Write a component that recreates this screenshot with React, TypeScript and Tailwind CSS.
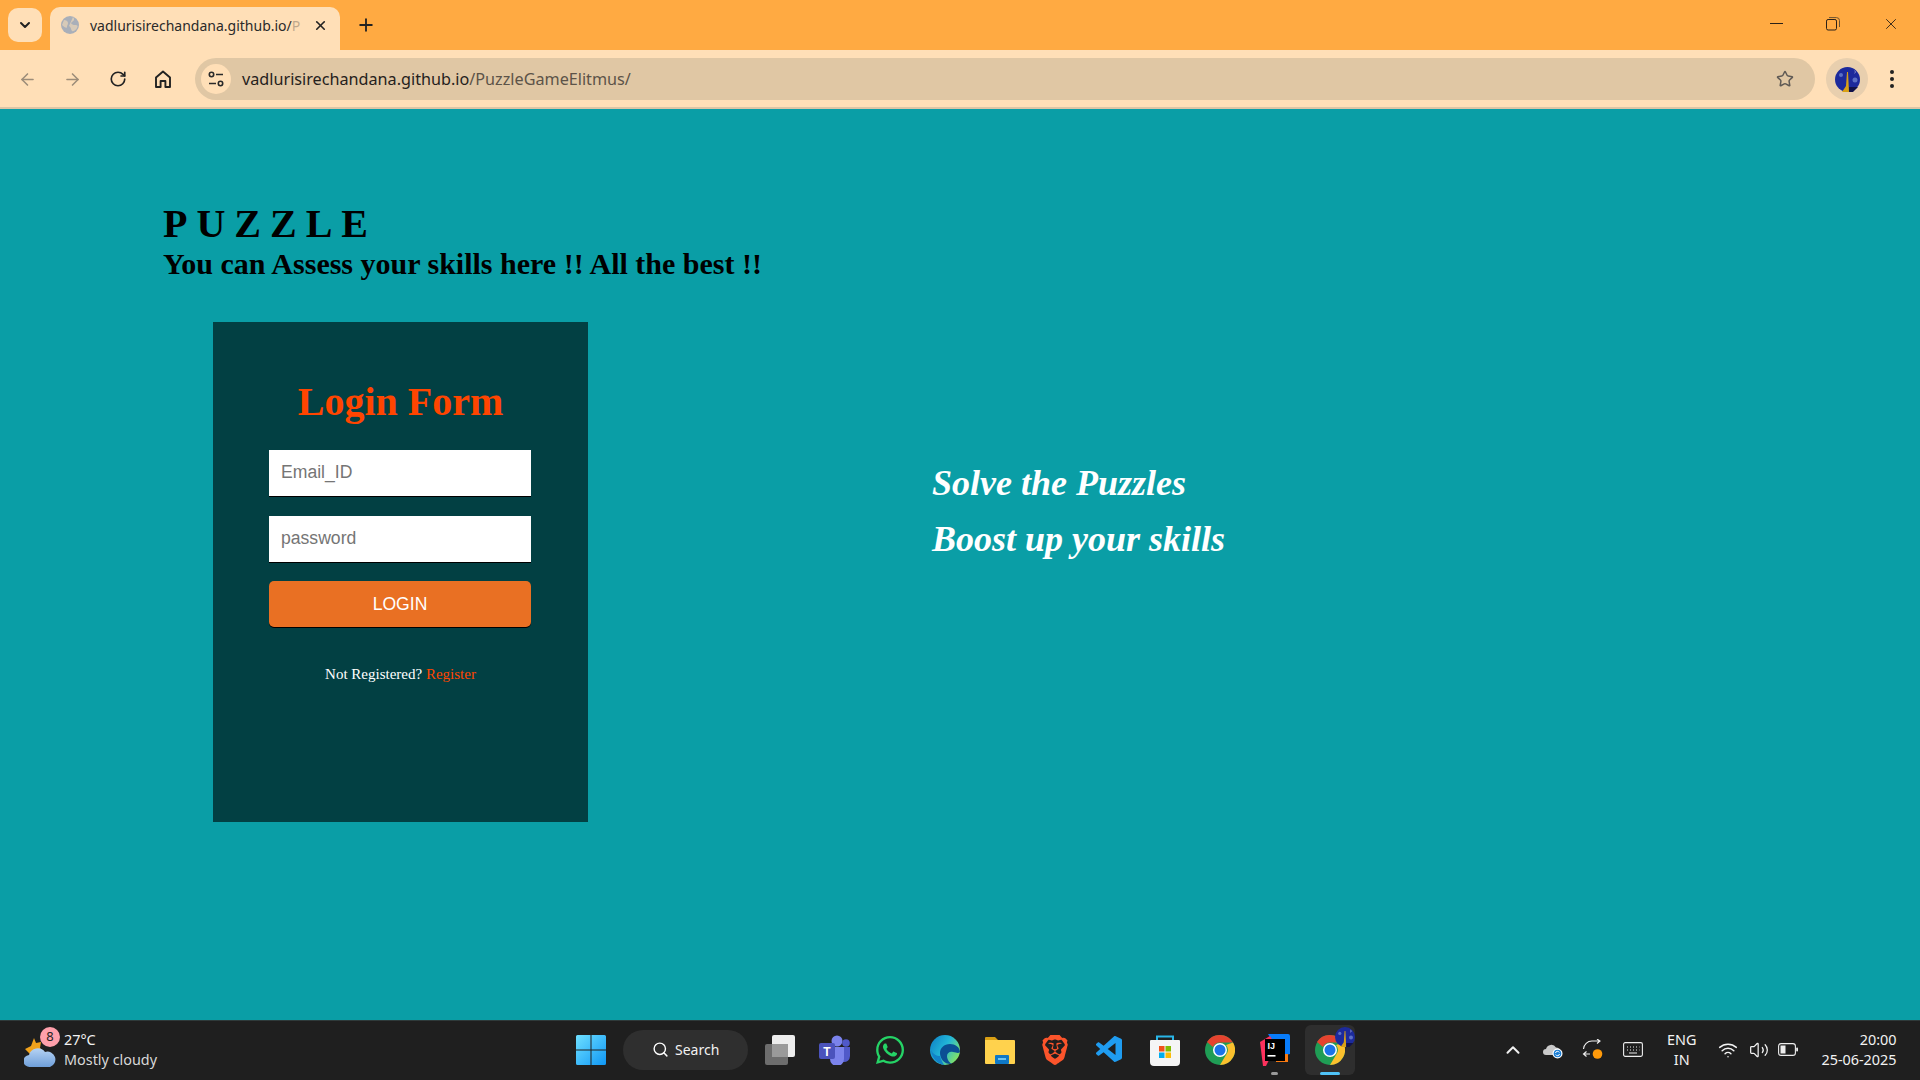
import { ArrowLeft, ArrowRight, ChevronDown, ChevronUp, Plus, RotateCw, Search, Star, Volume2, Wifi, X } from 'lucide-react';
import { FaWhatsapp } from 'react-icons/fa';
import { SiBrave } from 'react-icons/si';
import { VscVscode } from 'react-icons/vsc';

const uiFont = "font-['Noto_Sans',sans-serif]";

function Avatar({ size }: { size: number }) {
  return (
    <svg width={size} height={size} viewBox="0 0 25 25">
      <circle cx="12.5" cy="12.5" r="12.5" fill="#1c2a9c" />
      <circle cx="6" cy="8" r="2" fill="#5b6fc4" />
      <circle cx="20" cy="13" r="2.5" fill="#5b6fc4" />
      <path d="M19 3 q2 2 0 4 q3 -2 0 -4" fill="#fff" />
      <path d="M7 25 L11 19 L12 5 L13 5 L14 25 Z" fill="#d9a016" />
      <path d="M14 25 L14 20 L23 20 L18 25 Z" fill="#10124a" />
    </svg>
  );
}

function TuneIcon() {
  return (
    <svg width="18" height="18" viewBox="0 0 18 18" fill="none" stroke="#2a2a2a" strokeWidth="1.6">
      <circle cx="4.5" cy="4.5" r="2.2" />
      <path d="M9 4.5h7M2 13.5h7" />
      <circle cx="13.5" cy="13.5" r="2.2" />
    </svg>
  );
}

function HomeIcon() {
  return (
    <svg width="20" height="20" viewBox="0 0 20 20" fill="none" stroke="#222" strokeWidth="1.9" strokeLinejoin="round">
      <path d="M3 8.5 10 2.5l7 6V18h-4.6v-6H7.6v6H3z" />
    </svg>
  );
}

function RestoreIcon() {
  return (
    <svg width="14" height="14" viewBox="0 0 14 14" fill="none" stroke="#2a2118" strokeWidth="1">
      <rect x="0.5" y="2.5" width="10" height="10.5" rx="1.6" />
      <path d="M3 .6h7.5a3 3 0 0 1 3 3V10" stroke="#6b5230" />
    </svg>
  );
}

function Favicon() {
  return (
    <svg width="18" height="18" viewBox="0 0 18 18">
      <circle cx="9" cy="9" r="9" fill="#a9afb9" />
      <path d="M3 4c2 0 4 1 4 3s-1 2-1 4-3 0-5-2zM12 1c2 2 1 4-1 5s0 3 3 3 3 1 2 3-4 4-5 3-1-4-3-5" fill="#fde0b8" opacity=".55" />
    </svg>
  );
}

function WeatherIcon() {
  return (
    <svg width="32" height="36" viewBox="0 0 32 36">
      <path d="M10 6 12 11 17 10 16 16 20 20 6 22 1 17 7 14z" fill="#f0a21c" />
      <defs>
        <linearGradient id="cloud" x1="0" y1="0" x2="0" y2="1">
          <stop offset="0" stopColor="#b6d3f4" />
          <stop offset="1" stopColor="#6f9fd9" />
        </linearGradient>
      </defs>
      <path d="M6 35a6 6 0 0 1-1-12 9 9 0 0 1 16-3 7.5 7.5 0 0 1 5 15z" fill="url(#cloud)" />
    </svg>
  );
}

function WindowsLogo() {
  return (
    <svg width="30" height="30" viewBox="0 0 30 30">
      <defs>
        <linearGradient id="win" x1="0" y1="0" x2="1" y2="1">
          <stop offset="0" stopColor="#6fe0ff" />
          <stop offset="1" stopColor="#0f97f5" />
        </linearGradient>
      </defs>
      <path d="M0 1.5A1.5 1.5 0 0 1 1.5 0h13v14.5H0zM15.5 0h13A1.5 1.5 0 0 1 30 1.5v13H15.5zM0 15.5h14.5V30h-13A1.5 1.5 0 0 1 0 28.5zM15.5 15.5H30v13a1.5 1.5 0 0 1-1.5 1.5h-13z" fill="url(#win)" />
    </svg>
  );
}

function TaskViewIcon() {
  return (
    <svg width="30" height="30" viewBox="0 0 30 30">
      <rect x="0" y="9" width="23" height="21" rx="2" fill="#6d6d6d" />
      <rect x="7" y="0" width="23" height="22" rx="2" fill="#ededed" />
      <rect x="7" y="9" width="16" height="13" fill="#9a9a9a" />
    </svg>
  );
}

function TeamsIcon() {
  return (
    <svg width="32" height="30" viewBox="0 0 32 30">
      <circle cx="18" cy="6" r="5.5" fill="#7b83eb" />
      <circle cx="27" cy="8" r="3.8" fill="#5059c9" />
      <path d="M21 12h10v9a6 6 0 0 1-7 6z" fill="#5059c9" />
      <path d="M9 12h16v12a7 7 0 0 1-14 0z" fill="#7b83eb" />
      <rect x="0" y="8" width="16" height="16" rx="2" fill="#4b53bc" />
      <text x="8" y="20.5" textAnchor="middle" fontSize="12" fontWeight="700" fill="#fff" fontFamily="Liberation Sans, sans-serif">T</text>
    </svg>
  );
}

function EdgeIcon() {
  return (
    <svg width="30" height="30" viewBox="0 0 30 30">
      <defs>
        <linearGradient id="edge" x1="0" y1="0" x2="1" y2="0.6">
          <stop offset="0" stopColor="#0c7cc4" />
          <stop offset=".55" stopColor="#22b6d8" />
          <stop offset="1" stopColor="#7fe06a" />
        </linearGradient>
      </defs>
      <circle cx="15" cy="15" r="15" fill="url(#edge)" />
      <path d="M30 17c0-5-5-8-10-8-6 0-10 4-10 9 0 6 5 12 12 11-2-1-5-4-5-8 0-3 3-5 6-4 3 0 5 2 7 0z" fill="#0b4f94" />
      <path d="M14 30C8 29 2 24 1 15c2 4 5 6 9 6 1 4 3 7 4 9z" fill="#1282c8" />
    </svg>
  );
}

function FolderIcon() {
  return (
    <svg width="30" height="30" viewBox="0 0 30 30">
      <path d="M0 3a1 1 0 0 1 1-1h9l3 3h-13z" fill="#d99f14" />
      <path d="M0 5h29a1 1 0 0 1 1 1v22a1 1 0 0 1-1 1H1a1 1 0 0 1-1-1z" fill="#ffd24d" />
      <rect x="10" y="20" width="14" height="9" rx="1" fill="#0f78c6" />
      <rect x="13" y="23" width="8" height="2" fill="#6cc4f3" />
    </svg>
  );
}

function StoreIcon() {
  return (
    <svg width="30" height="32" viewBox="0 0 30 32">
      <path d="M7 7V2.5h16V7" fill="none" stroke="#29b6e8" strokeWidth="2" />
      <path d="M1 6h28a1 1 0 0 1 1 1v21a4 4 0 0 1-4 4H4a4 4 0 0 1-4-4V7a1 1 0 0 1 1-1z" fill="#f5f5f5" />
      <rect x="9" y="12" width="5.5" height="5.5" fill="#f1511b" />
      <rect x="15.5" y="12" width="5.5" height="5.5" fill="#80bb03" />
      <rect x="9" y="18.5" width="5.5" height="5.5" fill="#00adef" />
      <rect x="15.5" y="18.5" width="5.5" height="5.5" fill="#fbbc09" />
    </svg>
  );
}

function ChromeIcon() {
  return (
    <svg width="30" height="30" viewBox="0 0 30 30">
      <circle cx="15" cy="15" r="15" fill="#1f9d55" />
      <path d="M15 0a15 15 0 0 1 13 7.5H15a7.5 7.5 0 0 0-7 4.5L2 7A15 15 0 0 1 15 0z" fill="#e5432f" />
      <path d="M28 7.5A15 15 0 0 1 15 30l6.5-11A7.5 7.5 0 0 0 21 10z" fill="#fbc02d" />
      <circle cx="15" cy="15" r="7" fill="#fff" />
      <circle cx="15" cy="15" r="5.5" fill="#1a73e8" />
    </svg>
  );
}

function IntelliJIcon() {
  return (
    <svg width="30" height="32" viewBox="0 0 30 32">
      <path d="M8 0h20a2 2 0 0 1 2 2v18l-8 2z" fill="#087cfa" />
      <path d="M0 8 10 2l6 10L6 32H3z" fill="#fe315d" />
      <path d="M16 20h12v8H16z" fill="#f97a12" />
      <rect x="5" y="5" width="20" height="22" fill="#000" />
      <text x="7.5" y="15" fontSize="9" fontWeight="700" fill="#fff" fontFamily="Liberation Sans, sans-serif">IJ</text>
      <rect x="7.5" y="21" width="8" height="1.6" fill="#fff" />
    </svg>
  );
}

function OneDriveIcon() {
  return (
    <svg width="20" height="18" viewBox="0 0 20 18">
      <path d="M3 14a3 3 0 0 1 0-6 5.500 5.500 0 0 1 10-1.500A4 4 0 0 1 17 10v4z" fill="#c9c9c9" />
      <circle cx="14.500" cy="12.500" r="5" fill="#fff" />
      <circle cx="14.500" cy="12.500" r="3.800" fill="#1b7fd6" />
      <path d="M12.500 12a2 2 0 0 1 3.800-.5M16.500 13a2 2 0 0 1-3.800.5" fill="none" stroke="#fff" strokeWidth="1" />
    </svg>
  );
}

function SyncIcon() {
  return (
    <svg width="22" height="22" viewBox="0 0 22 22" fill="none" stroke="#f0f0f0" strokeWidth="1.100">
      <path d="M1.500 10A8.500 8.500 0 0 1 10 2h8M15 0l3 2-3 2.500M1.500 15H8M4.500 12.500l-3 2.500 3 2.500" />
      <circle cx="15.500" cy="15" r="4.800" fill="#ff9a0a" stroke="none" />
    </svg>
  );
}

function KeyboardIcon() {
  return (
    <svg width="20" height="15" viewBox="0 0 20 15" fill="none" stroke="#eee" strokeWidth="1.100">
      <rect x=".6" y=".6" width="18.800" height="13.800" rx="1.600" />
      <path d="M4 5h1M7 5h1M10 5h1M13 5h1M16 5h.5M4 8h1M7 8h1M10 8h1M13 8h1M16 8h.5M6 11h8" />
    </svg>
  );
}

function BatteryIcon() {
  return (
    <svg width="20" height="13" viewBox="0 0 20 13" fill="none">
      <rect x=".6" y=".6" width="16.800" height="11.800" rx="2.500" stroke="#eee" strokeWidth="1.100" />
      <rect x="2.500" y="2.500" width="5" height="8" fill="#eee" />
      <rect x="18.200" y="4.500" width="1.800" height="4" rx=".8" fill="#eee" />
    </svg>
  );
}

const taskbarIcons = [
  <TaskViewIcon key="task" />,
  <TeamsIcon key="teams" />,
  <FaWhatsapp key="whatsapp" size={32} className="text-[#25d366]" />,
  <EdgeIcon key="edge" />,
  <FolderIcon key="folder" />,
  <SiBrave key="brave" size={30} className="text-[#fb542b]" />,
  <VscVscode key="vscode" size={32} className="text-[#1f9cf0]" />,
  <StoreIcon key="store" />,
  <ChromeIcon key="chrome" />,
];

function BrowserChrome() {
  return (
    <header className={`shrink-0 ${uiFont}`}>
      {/* Tab strip */}
      <div className="flex h-[50px] bg-[#ffaa42] pl-2">
        <button className="mt-2 flex h-[34px] w-[34px] items-center justify-center rounded-[10px] bg-[#ffdfb7]">
          <ChevronDown size={16} strokeWidth={3} className="text-[#222]" />
        </button>
        <div className="mt-[7px] ml-2 flex h-[43px] w-[290px] items-center rounded-t-[10px] bg-[#ffdfb7] pr-[12px] pb-[7px] pl-[11px]">
          <Favicon />
          <span className="ml-[11px] whitespace-nowrap text-[14px] text-[#2a2a2a]">
            vadlurisirechandana.github.io/<span className="opacity-30">P</span>
          </span>
          <X size={15} strokeWidth={2.6} className="ml-auto text-[#222]" />
        </div>
        <Plus size={20} strokeWidth={2.2} className="mt-[15px] ml-4 text-[#222]" />
        <div className="ml-auto flex h-full items-start text-[#2a2118]">
          <div className="mt-[23px] mr-[43px] h-px w-[13px] bg-[#2a2118]" />
          <div className="mt-[17px] mr-[42px]"><RestoreIcon /></div>
          <X size={18} strokeWidth={1.2} className="mt-[15px] mr-[20px]" />
        </div>
      </div>
      {/* Toolbar */}
      <div className="flex h-[59px] items-center border-b-2 border-[#dcc5a5] bg-[#ffdfb7] pt-px">
        <ArrowLeft size={19} className="ml-[18px] text-[#9d8d79]" />
        <ArrowRight size={19} className="ml-[26px] text-[#9d8d79]" />
        <RotateCw size={18} strokeWidth={2.2} className="ml-[27px] text-[#222]" />
        <div className="ml-[26px]"><HomeIcon /></div>
        <div className="ml-[22px] flex h-[42px] w-[1620px] items-center rounded-full bg-[#e0c7a4] pr-[21px] pl-[6px]">
          <div className="flex h-[30px] w-[30px] items-center justify-center rounded-full bg-[#ffdfb7]">
            <TuneIcon />
          </div>
          <div className="ml-[11px] text-[16.200px] text-[#25211c]">
            vadlurisirechandana.github.io<span className="text-[#5c5348]">/PuzzleGameElitmus/</span>
          </div>
          <Star size={18} strokeWidth={2} className="ml-auto text-[#5f5a55]" />
        </div>
        <div className="ml-[11px] flex h-[42px] w-[42px] items-center justify-center rounded-full bg-[#e8cfae]">
          <Avatar size={25} />
        </div>
        <div className="ml-[22px] flex flex-col gap-[3.500px]">
          <div className="h-[3.500px] w-[3.500px] rounded-full bg-[#222]" />
          <div className="h-[3.500px] w-[3.500px] rounded-full bg-[#222]" />
          <div className="h-[3.500px] w-[3.500px] rounded-full bg-[#222]" />
        </div>
      </div>
    </header>
  );
}

function LoginPanel() {
  return (
    <form className="flex h-[500px] w-[375px] flex-col items-center bg-[#024043] pt-[57px]">
      <h2 className="text-[40px] leading-[46px] font-bold text-[#ff4500]">Login Form</h2>
      <input
        placeholder="Email_ID"
        className="mt-[25px] ml-[-1px] h-[46px] w-[262px] bg-white pb-[2px] pl-3 font-['Liberation_Sans',sans-serif] text-[17.600px] shadow-[0_1px_0_#000] outline-none placeholder:text-[#757575]"
      />
      <input
        placeholder="password"
        className="mt-[20px] ml-[-1px] h-[46px] w-[262px] bg-white pb-[2px] pl-3 font-['Liberation_Sans',sans-serif] text-[17.600px] shadow-[0_1px_0_#000] outline-none placeholder:text-[#757575]"
      />
      <button
        type="button"
        className="mt-[19px] ml-[-1px] h-[46px] w-[262px] rounded-[5px] bg-[#e97023] font-['Liberation_Sans',sans-serif] text-[17.600px] text-white shadow-[0_1px_0_#000]"
      >
        LOGIN
      </button>
      <p className="mt-[36px] text-[15px] text-white">
        Not Registered? <a className="text-[#ff4500]">Register</a>
      </p>
    </form>
  );
}

function Taskbar() {
  return (
    <footer className={`flex h-[60px] shrink-0 items-center border-t border-[#2f3a3a] bg-[#1f1f1f] pb-[2px] text-[#f2f2f2] ${uiFont}`}>
      {/* Weather */}
      <div className="relative ml-[24px] flex w-[552px] items-center">
        <WeatherIcon />
        <div className="absolute top-[-3px] left-[16px] flex h-[20px] w-[20px] items-center justify-center rounded-full bg-[#ffa0ab] text-[13px] text-[#222]">8</div>
        <div className="ml-2 text-[14.400px] leading-[20px]">
          <div>27°C</div>
          <div className="text-[#d8d8d8]">Mostly cloudy</div>
        </div>
      </div>
      <WindowsLogo />
      <div className="ml-[17px] flex h-[40px] w-[125px] items-center rounded-full bg-[#2f2f2f] pl-[29px]">
        <Search size={17} strokeWidth={2} className="text-white" />
        <span className="ml-[6px] text-[14px]">Search</span>
      </div>
      {/* Pinned apps */}
      <div className="ml-[4px] flex">
        {taskbarIcons.map(icon => (
          <div key={icon.key} className="flex h-[50px] w-[55px] items-center justify-center">{icon}</div>
        ))}
        <div className="relative flex h-[50px] w-[55px] items-center justify-center">
          <IntelliJIcon />
          <div className="absolute bottom-0 left-[24px] h-[3px] w-[7px] rounded-full bg-[#9a9a9a]" />
        </div>
        <div className="relative ml-[3px] flex h-[50px] w-[50px] items-center justify-center rounded-md bg-[#2e2e2e]">
          <ChromeIcon />
          <div className="absolute top-[2px] right-0"><Avatar size={20} /></div>
          <div className="absolute bottom-0 left-[15px] h-[3px] w-[20px] rounded-full bg-[#4fc3f7]" />
        </div>
      </div>
      {/* Tray */}
      <div className="ml-[147px] flex items-center">
        <ChevronUp size={22} strokeWidth={2.200} className="text-[#f0f0f0]" />
        <div className="ml-[19px]"><OneDriveIcon /></div>
        <div className="ml-[19px]"><SyncIcon /></div>
        <div className="ml-[19px]"><KeyboardIcon /></div>
        <div className="ml-[24px] text-center text-[14.400px] leading-[20px]">
          <div>ENG</div>
          <div>IN</div>
        </div>
        <Wifi size={20} strokeWidth={1.800} className="ml-[22px]" />
        <Volume2 size={20} strokeWidth={1.500} className="ml-[11px]" />
        <div className="ml-[9px]"><BatteryIcon /></div>
        <div className="ml-[23px] text-right text-[14.400px] leading-[20px]">
          <div>20:00</div>
          <div>25-06-2025</div>
        </div>
      </div>
    </footer>
  );
}

export default function App() {
  return (
    <div className="flex h-screen flex-col overflow-hidden">
      <BrowserChrome />
      <main className="flex-1 bg-[#0a9ea6] pt-[91px] pl-[163px] font-['Liberation_Serif',serif]">
        <h1 className="text-[40px] leading-[47px] font-bold tracking-[9px] text-black">PUZZLE</h1>
        <p className="text-[30px] leading-[34px] font-bold text-black">You can Assess your skills here !! All the best !!</p>
        <div className="mt-[41px] ml-[50px] flex">
          <LoginPanel />
          <div className="mt-[133px] ml-[344px] text-[36px] leading-[56px] font-bold text-white italic">
            <div>Solve the Puzzles</div>
            <div>Boost up your skills</div>
          </div>
        </div>
      </main>
      <Taskbar />
    </div>
  );
}
